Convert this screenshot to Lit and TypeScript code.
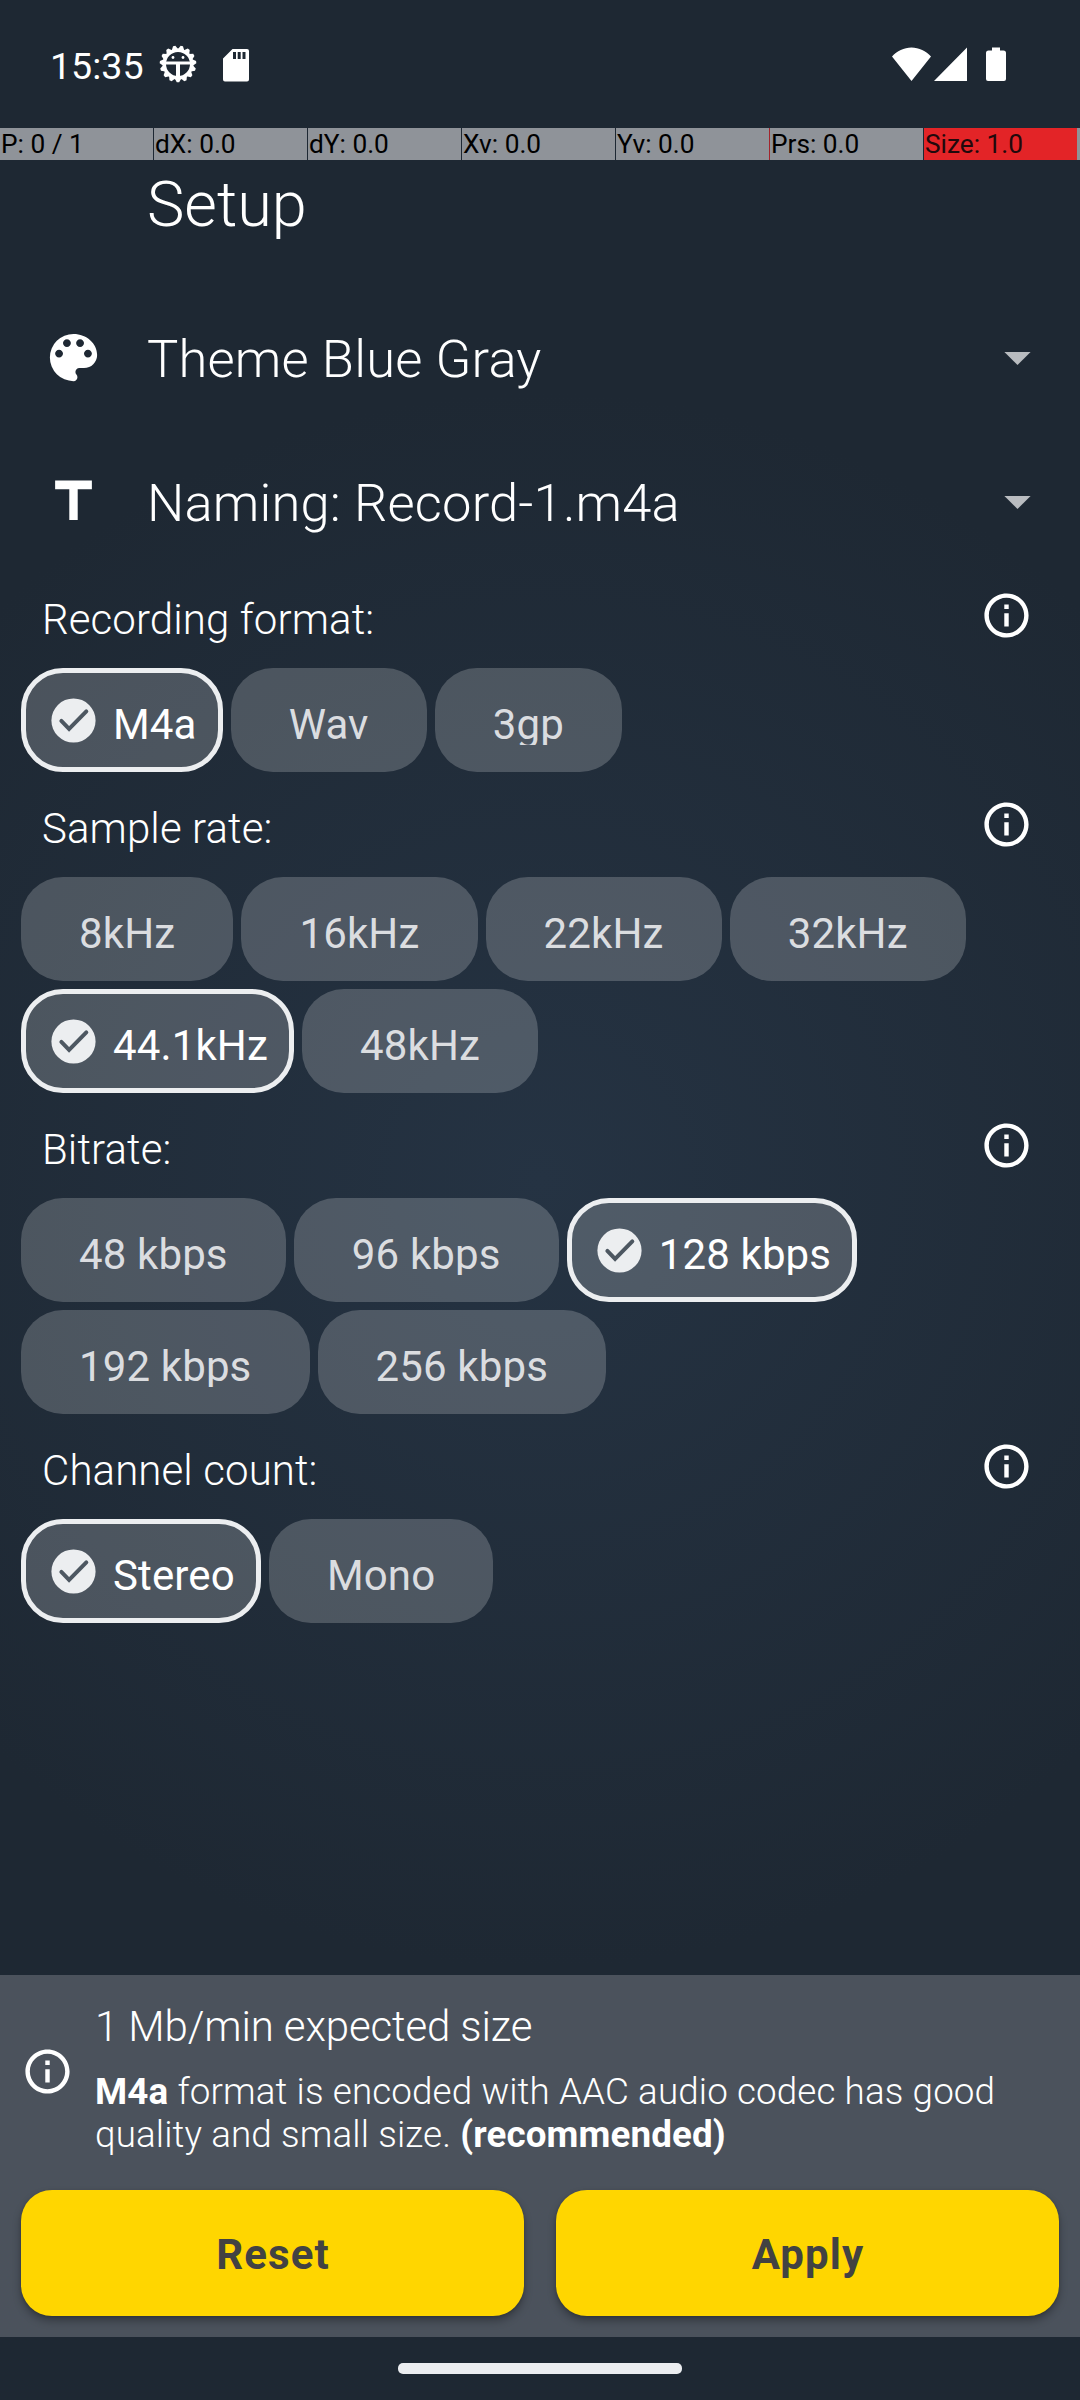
import { LitElement, html, svg, css } from "lit";
import { customElement, property, state } from "lit/decorators.js";
import { classMap } from "lit/directives/class-map.js";

const infoPath = svg`<path fill="currentColor" d="M11 7h2v2h-2zm0 4h2v6h-2zm1-9C6.48 2 2 6.48 2 12s4.48 10 10 10 10-4.48 10-10S17.52 2 12 2zm0 18c-4.41 0-8-3.59-8-8s3.59-8 8-8 8 3.590 8 8-3.590 8-8 8z"/>`;
const palettePath = svg`<path fill="currentColor" d="M12 3a9 9 0 0 0 0 18c.83 0 1.500-.67 1.500-1.500 0-.39-.15-.74-.39-1.010-.23-.26-.38-.61-.38-.99 0-.83.67-1.500 1.500-1.500H16c2.760 0 5-2.240 5-5 0-4.420-4.030-8-9-8zm-5.500 9c-.83 0-1.500-.67-1.500-1.500S5.670 9 6.500 9 8 9.670 8 10.500 7.330 12 6.500 12zm3-4C8.670 8 8 7.330 8 6.500S8.670 5 9.500 5s1.500.67 1.500 1.500S10.330 8 9.500 8zm5 0c-.83 0-1.500-.67-1.500-1.500S13.670 5 14.500 5s1.500.67 1.500 1.500S15.330 8 14.500 8zm3 4c-.83 0-1.500-.67-1.500-1.500S16.670 9 17.500 9s1.500.67 1.500 1.500-.67 1.500-1.500 1.500z"/>`;
const titlePath = svg`<path fill="currentColor" d="M5 4v3.300h5.400V19h3.200V7.300H19V4z"/>`;

@customElement("option-chip")
class OptionChip extends LitElement {
  @property() label = "";
  @property({ type: Boolean }) selected = false;

  static styles = css`
    :host { display: block; }
    .chip {
      box-sizing: border-box;
      height: 104px;
      padding: 9px 58.200px 0 58px;
      border-radius: 42px;
      background: rgba(255, 255, 255, 0.2);
      color: #dbdde0;
      display: flex;
      align-items: center;
      font: 400 42px/49px Roboto, sans-serif;
      letter-spacing: 0.130px;
      white-space: nowrap;
    }
    .chip.selected {
      border: 5px solid #eceef0;
      padding: 9px 21.200px 0 21px;
      color: #fff;
    }
    .check { width: 53px; height: 53px; margin: -8px 13px 0 0; flex: none; }
    .text { clip-path: inset(0 0 4px 0); }
  `;

  render() {
    return html`<div class=${classMap({ chip: true, selected: this.selected })}>
      ${this.selected
        ? html`<svg class="check" viewBox="0 0 24 24">
            <circle cx="12" cy="12" r="10" fill="#eceef0" />
            <path d="M6.500 12.150l3.500 3.650L17.800 7.900" fill="none" stroke="#4d5761" stroke-width="1.800" stroke-linecap="round" />
          </svg>`
        : null}
      <span class="text">${this.label}</span>
    </div>`;
  }
}

interface Group {
  title: string;
  options: string[];
  value: string;
}

@customElement("app-root")
class AppRoot extends LitElement {
  @state() groups: Group[] = [
    { title: "Recording format:", options: ["M4a", "Wav", "3gp"], value: "M4a" },
    { title: "Sample rate:", options: ["8kHz", "16kHz", "22kHz", "32kHz", "44.1kHz", "48kHz"], value: "44.1kHz" },
    { title: "Bitrate:", options: ["48 kbps", "96 kbps", "128 kbps", "192 kbps", "256 kbps"], value: "128 kbps" },
    { title: "Channel count:", options: ["Stereo", "Mono"], value: "Stereo" },
  ];

  static styles = css`
    :host { display: block; }
    * { box-sizing: border-box; }
    .screen {
      width: 1080px;
      height: 2400px;
      display: flex;
      flex-direction: column;
      background: radial-gradient(circle 788px at 540px 1180px, #253343, #1e2833);
      color: #fff;
      font-family: Roboto, sans-serif;
      font-weight: 300;
      overflow: hidden;
    }
    .status {
      height: 128px;
      display: flex;
      align-items: center;
      padding: 5px 74px 0 50px;
      font-size: 37.600px;
      font-weight: 400;
    }
    .clock { line-height: 44px; margin-top: -2px; }
    .bug { width: 38px; height: 40px; margin: -5px 0 0 15px; }
    .card { width: 26px; height: 34px; margin: 0 0 3px 26px; }
    .signals { margin-left: auto; width: 114px; height: 34px; margin-top: -5px; }
    .pointer {
      height: 32px;
      flex: none;
      display: flex;
      gap: 1px;
      overflow: hidden;
    }
    .cell {
      width: 153px;
      flex: none;
      padding-left: 1px;
      background: #8f9399;
      color: #000;
      font: 400 26.250px/32px Roboto, sans-serif;
      white-space: nowrap;
    }
    .cell.prs { box-shadow: -1px 0 #a3242c; }
    .cell.size { background: #e32427; color: #21090c; box-shadow: 1px 0 #8f9399; }
    .title { height: 125px; padding: 8px 0 0 147px; font-size: 63px; line-height: 74px; }
    .row {
      height: 144px;
      flex: none;
      display: flex;
      align-items: center;
      padding: 0 49px 0 42px;
      font-size: 52.500px;
      letter-spacing: 0.170px;
    }
    .row .icon { width: 63px; height: 63px; margin-right: 42px; }
    .row .name { flex: 1; line-height: 62px; margin-top: 4px; }
    .row .arrow { width: 27px; height: 13px; margin-top: 3px; }
    .group { padding-left: 21px; }
    .head {
      height: 105px;
      display: flex;
      justify-content: space-between;
      padding: 0 47px 0 21px;
      font-size: 42px;
      line-height: 50px;
      letter-spacing: 0.100px;
    }
    .group.first .head { height: 95px; }
    .head .label { padding-top: 32px; }
    .info { width: 53px; height: 53px; flex: none; }
    .head .info { margin-top: 26px; }
    .group.first .label { padding-top: 22px; }
    .group.first .info { margin-top: 16px; }
    .chips { display: flex; flex-wrap: wrap; gap: 8px; }
    .spacer { flex: 1; }
    .panel {
      height: 362px;
      flex: none;
      background: #4b525c;
      padding: 0 21px;
      display: flex;
      flex-direction: column;
    }
    .summary { height: 215px; display: flex; }
    .summary .info { margin: 70px 21px 0 0; }
    .size-line { font-size: 42px; line-height: 50px; margin-top: 27px; letter-spacing: -0.120px; }
    .desc { font-size: 36.750px; line-height: 43px; margin-top: 18px; letter-spacing: 0.130px; }
    .desc b { font-weight: 700; }
    .copy { width: 940px; }
    .buttons { display: grid; grid-template-columns: 1fr 1fr; gap: 32px; }
    .button {
      height: 126px;
      border: 0;
      border-radius: 31px;
      background: #ffd600;
      color: #424242;
      font: 700 42px/50px Roboto, sans-serif;
      letter-spacing: 1.100px;
      padding: 4px 0 0 1px;
      box-shadow: 0 5px 8px rgba(0, 0, 0, 0.3), 0 1px 3px rgba(0, 0, 0, 0.15);
    }
    .nav {
      height: 63px;
      flex: none;
      background: #1e2833;
      display: flex;
      justify-content: center;
      padding-top: 26px;
    }
    .pill { width: 284px; height: 11px; border-radius: 5px; background: #ebedf0; }
  `;

  private pick(group: Group, value: string) {
    this.groups = this.groups.map((g) => (g === group ? { ...g, value } : g));
  }

  private info() {
    return html`<svg class="info" viewBox="0 0 24 24">${infoPath}</svg>`;
  }

  private row(icon: unknown, name: string) {
    return html`<div class="row">
      <svg class="icon" viewBox="0 0 24 24">${icon}</svg>
      <span class="name">${name}</span>
      <svg class="arrow" viewBox="0 0 27 13"><path fill="#b9bcc0" d="M.4 0h26.200L13.500 13z" /></svg>
    </div>`;
  }

  render() {
    const teeth = Array.from({ length: 15 }, (_, i) => i * 24 + 12);
    return html`<div class="screen">
      <div class="status">
        <span class="clock">15:35</span>
        <svg class="bug" viewBox="-19 -20 38 40">
          <circle r="13.700" fill="none" stroke="#fff" stroke-width="3.400" />
          ${teeth.map((a) => svg`<path fill="#fff" transform="rotate(${a})" d="M-3.300 -14.500L-1.200 -18.300H1.200L3.300 -14.500z" />`)}
          <path fill="#fff" d="M-13-2.500h26v3h-26zM-2 0h4v15h-4z" />
          <circle cx="-5" cy="-6.500" r="1.400" fill="#fff" />
          <circle cx="5" cy="-6.500" r="1.400" fill="#fff" />
        </svg>
        <svg class="card" viewBox="0 0 26 34">
          <path fill="#fff" fill-rule="evenodd" d="M9.500 1H24a2 2 0 0 1 2 2v28.500a2 2 0 0 1-2 2H2a2 2 0 0 1-2-2V10.500zM10 4v7h3V4zm4.700 0v7h3V4zm4.800 0v7h3V4z" />
        </svg>
        <svg class="signals" viewBox="0 0 114 34">
          <path fill="#fff" d="M0 9.500C5 4 12 .5 19.500 .5S34 4 39 9.500L19.500 34zM42 34L75 .5V34zM94 6q0-2.500 2.500-2.500H100V.5h8v3h3.500q2.500 0 2.500 2.500v26q0 2-2 2H96q-2 0-2-2z" />
        </svg>
      </div>
      <div class="pointer">
        <span class="cell">P: 0 / 1</span>
        <span class="cell">dX: 0.0</span>
        <span class="cell">dY: 0.0</span>
        <span class="cell">Xv: 0.0</span>
        <span class="cell">Yv: 0.0</span>
        <span class="cell prs">Prs: 0.0</span>
        <span class="cell size">Size: 1.0</span>
        <span class="cell"></span>
      </div>
      <div class="title">Setup</div>
      ${this.row(palettePath, "Theme Blue Gray")} ${this.row(titlePath, "Naming: Record-1.m4a")}
      ${this.groups.map(
        (g, i) => html`<section class=${classMap({ group: true, first: i === 0 })}>
          <div class="head"><span class="label">${g.title}</span>${this.info()}</div>
          <div class="chips">
            ${g.options.map(
              (o) => html`<option-chip .label=${o} .selected=${o === g.value} @click=${() => this.pick(g, o)}></option-chip>`
            )}
          </div>
        </section>`
      )}
      <div class="spacer"></div>
      <div class="panel">
        <div class="summary">
          ${this.info()}
          <div class="copy">
            <div class="size-line">1 Mb/min expected size</div>
            <div class="desc"><b>M4a</b> format is encoded with AAC audio codec has good quality and small size. <b>(recommended)</b></div>
          </div>
        </div>
        <div class="buttons">
          <button class="button">Reset</button>
          <button class="button">Apply</button>
        </div>
      </div>
      <div class="nav"><div class="pill"></div></div>
    </div>`;
  }
}
